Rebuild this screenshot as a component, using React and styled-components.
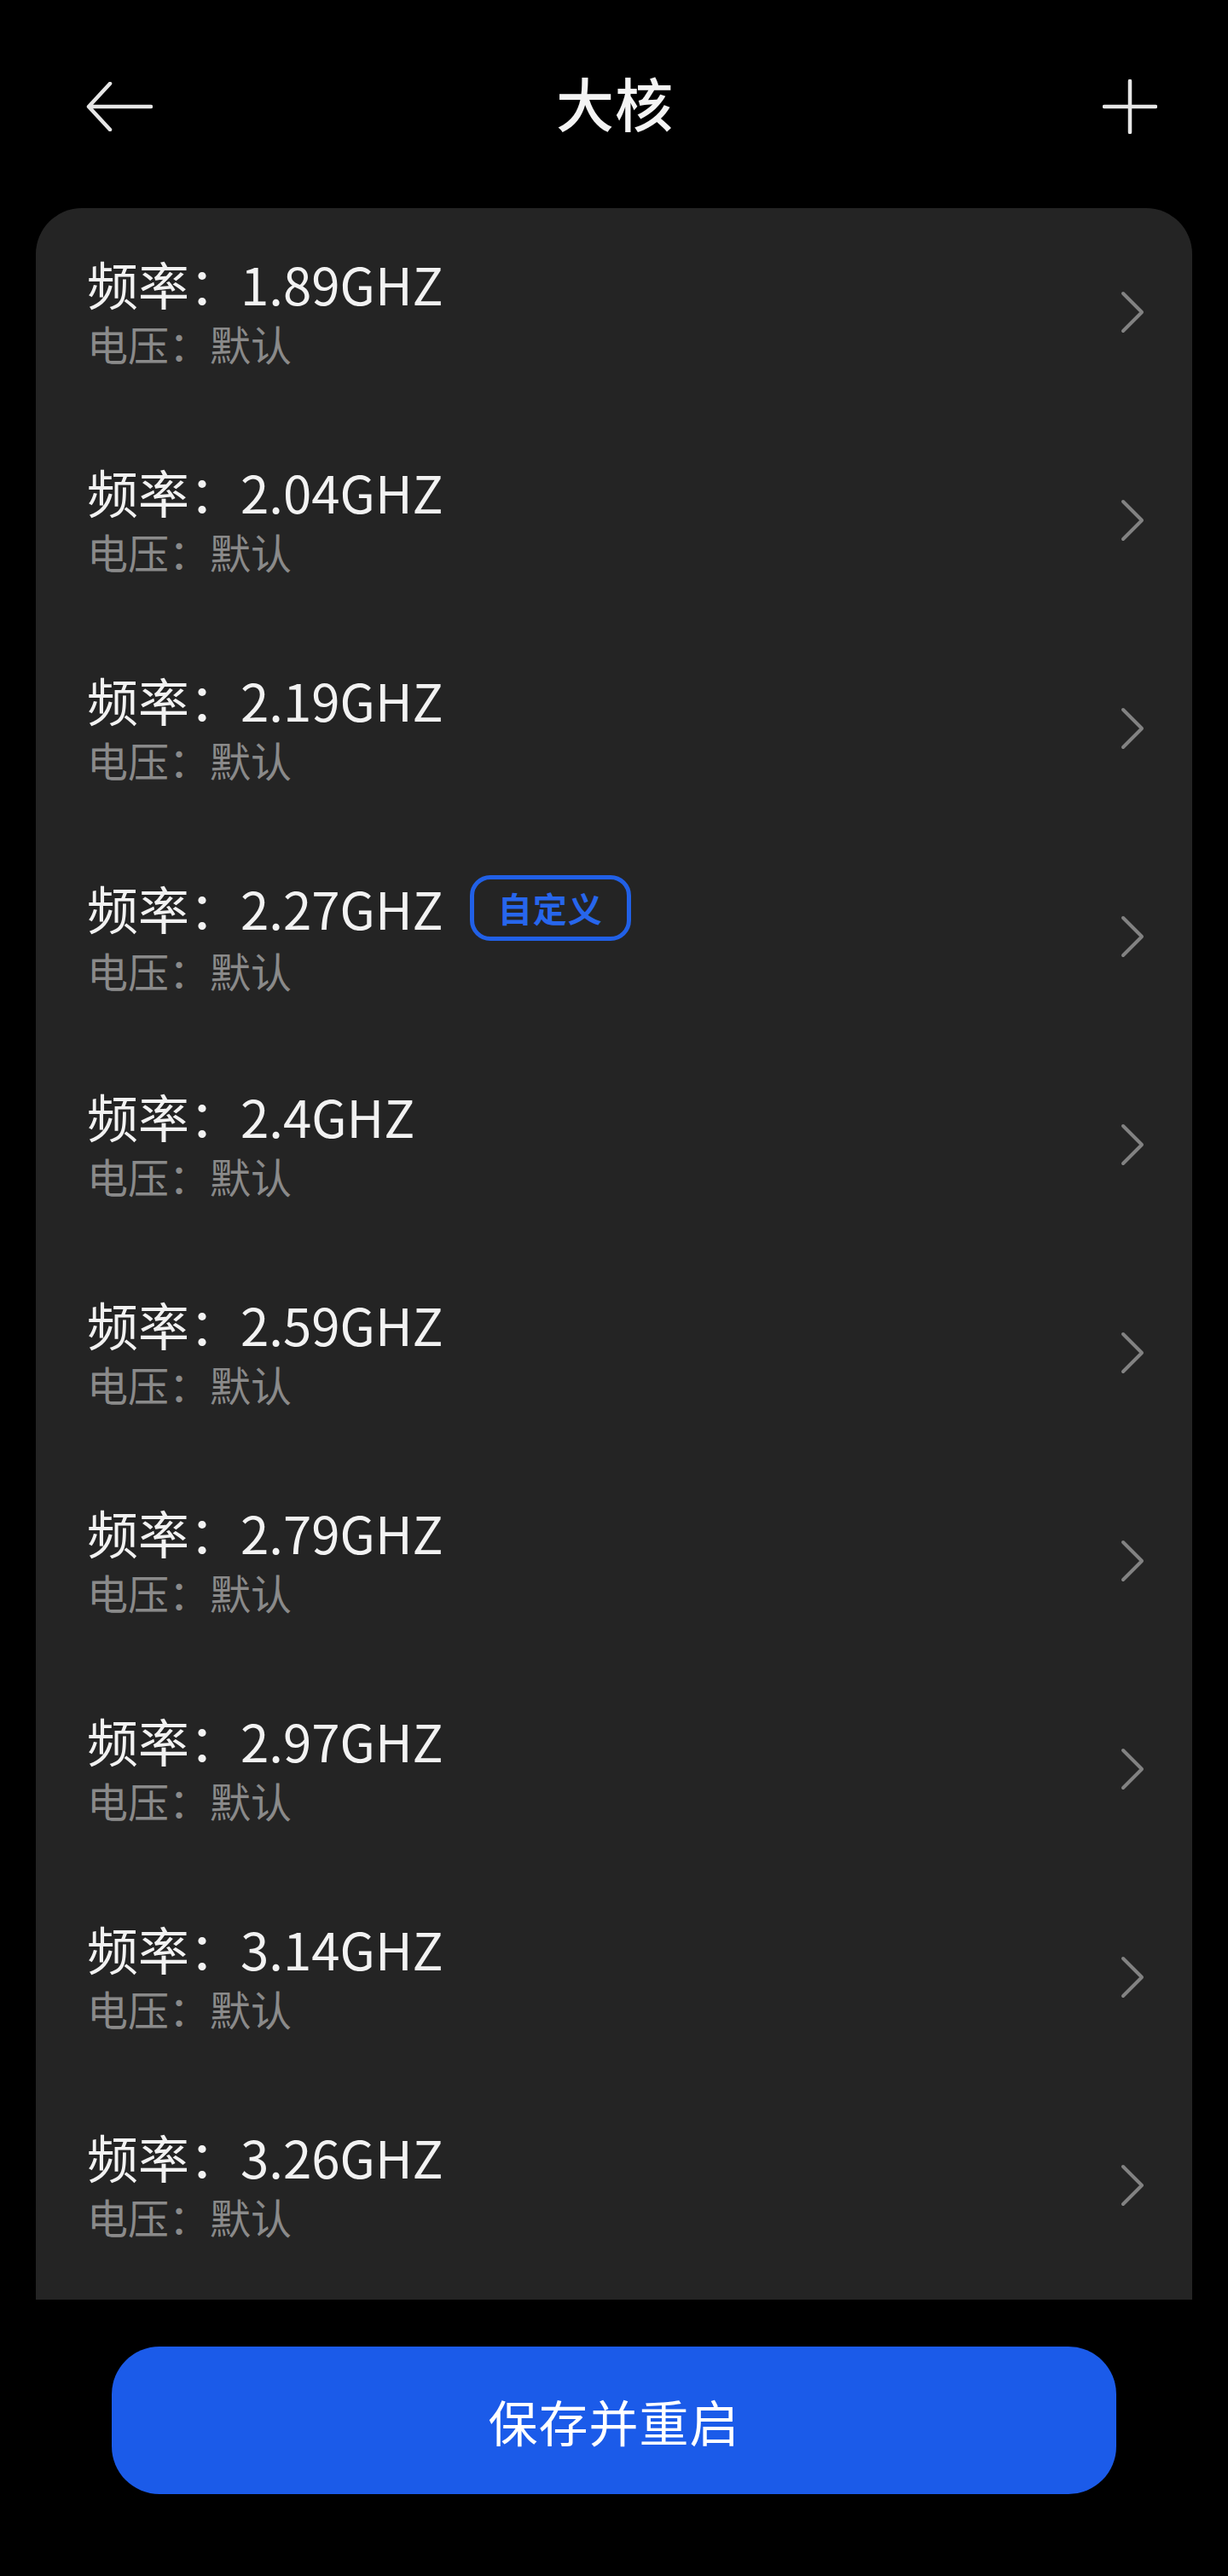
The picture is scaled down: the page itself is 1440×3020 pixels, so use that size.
import React from "react";
import styled, { createGlobalStyle } from "styled-components";

const Global = createGlobalStyle`
  html, body {
    margin: 0;
    padding: 0;
    background: #000;
  }
  body {
    font-family: "Noto Sans CJK SC", "Noto Sans", sans-serif;
    color: #fff;
  }
  * { box-sizing: border-box; }
`;

const Page = styled.div`
  width: 1440px;
  min-height: 3020px;
  background: #000;
  display: flex;
  flex-direction: column;
`;

const Header = styled.header`
  height: 244px;
  padding: 6px 83px 0 101px;
  display: grid;
  grid-template-columns: 1fr auto 1fr;
  align-items: center;
`;

const IconButton = styled.button`
  background: none;
  border: none;
  padding: 0;
  height: 64px;
  display: flex;
  align-items: center;
  justify-self: ${(p) => (p.$end ? "end" : "start")};
  cursor: pointer;
`;

const Title = styled.h1`
  margin: 0 0 10px;
  font-size: 68px;
  line-height: 80px;
  font-weight: 500;
  color: #f4f4f4;
  letter-spacing: 1px;
  transform: translateX(-8px);
`;

const Card = styled.section`
  margin: 0 42px;
  background: #242424;
  border-radius: 54px 54px 0 0;
  padding-bottom: 12px;
  display: flex;
  flex-direction: column;
`;

const Row = styled.div`
  height: 244px;
  padding: 0 56px 0 60px;
  display: flex;
  align-items: center;
  justify-content: space-between;
`;

const RowText = styled.div`
  display: flex;
  flex-direction: column;
  gap: 4px;
  margin-top: -4px;
`;

const RowTitle = styled.div`
  display: flex;
  align-items: center;
  gap: 31px;
  font-size: 60px;
  line-height: 72px;
  color: #f2f2f2;
  font-weight: 400;
`;

const RowSub = styled.div`
  font-size: 48px;
  line-height: 60px;
  color: #8a8a8a;
`;

const Badge = styled.span`
  display: inline-flex;
  align-items: center;
  justify-content: center;
  height: 77px;
  padding: 0 28px;
  border: 5px solid #2160e6;
  border-radius: 24px;
  color: #2766ec;
  font-size: 40px;
  line-height: 1;
  font-weight: 700;
  letter-spacing: 1px;
`;

const Footer = styled.div`
  padding: 55px 131px 0;
`;

const SaveButton = styled.button`
  width: 100%;
  height: 173px;
  border: none;
  border-radius: 56px;
  background: #1b5be9;
  color: #fff;
  font-family: "Noto Sans CJK SC", "Noto Sans", sans-serif;
  font-size: 58px;
  font-weight: 400;
  letter-spacing: 1px;
  cursor: pointer;
`;

const BackIcon = () => (
  <svg width="78" height="58" viewBox="0 0 78 58" fill="none">
    <path d="M76 29H3M28 2L3 29L28 56" stroke="#e6e6e6" strokeWidth="4.5" strokeLinecap="round" strokeLinejoin="round" />
  </svg>
);

const PlusIcon = () => (
  <svg width="64" height="64" viewBox="0 0 64 64" fill="none">
    <path d="M32 2V62M2 32H62" stroke="#e6e6e6" strokeWidth="4.5" strokeLinecap="round" />
  </svg>
);

const Chevron = () => (
  <svg width="28" height="50" viewBox="0 0 28 50" fill="none">
    <path d="M3 3L25 25L3 47" stroke="#828282" strokeWidth="4" strokeLinecap="round" strokeLinejoin="round" />
  </svg>
);

const freqs = [
  { f: "1.89GHZ" },
  { f: "2.04GHZ" },
  { f: "2.19GHZ" },
  { f: "2.27GHZ", custom: true },
  { f: "2.4GHZ" },
  { f: "2.59GHZ" },
  { f: "2.79GHZ" },
  { f: "2.97GHZ" },
  { f: "3.14GHZ" },
  { f: "3.26GHZ" },
];

export default function App() {
  return (
    <>
      <Global />
      <Page>
        <Header>
          <IconButton aria-label="返回">
            <BackIcon />
          </IconButton>
          <Title>大核</Title>
          <IconButton aria-label="添加" $end>
            <PlusIcon />
          </IconButton>
        </Header>
        <Card>
          {freqs.map((r) => (
            <Row key={r.f}>
              <RowText>
                <RowTitle>
                  <span>频率：{r.f}</span>
                  {r.custom && <Badge>自定义</Badge>}
                </RowTitle>
                <RowSub>电压：默认</RowSub>
              </RowText>
              <Chevron />
            </Row>
          ))}
        </Card>
        <Footer>
          <SaveButton>保存并重启</SaveButton>
        </Footer>
      </Page>
    </>
  );
}
